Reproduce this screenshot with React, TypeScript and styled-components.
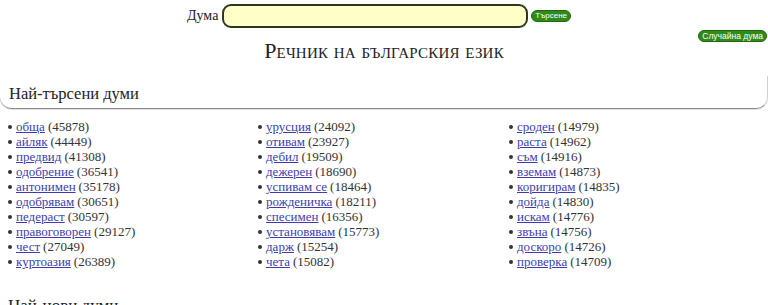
import React from 'react';
import styled, { createGlobalStyle } from 'styled-components';

const GlobalStyle = createGlobalStyle`
    body {
        margin: 0;
        background: #fff;
        font-family: "Liberation Serif", "Times New Roman", serif;
        color: #222;
    }
`;

const Page = styled.div`
    width: 768px;
`;

const SearchRow = styled.form`
    display: flex;
    align-items: center;
    justify-content: center;
    gap: 3px;
    padding-top: 4px;
    margin: 0 0 0 -10px;
`;

const Label = styled.label`
    font-size: 14px;
    color: #222;
    margin-right: 1px;
`;

const WordInput = styled.input`
    width: 296px;
    height: 20px;
    padding: 0 3px;
    background: #ffffc8;
    border: 2px solid #2f3522;
    border-radius: 9px;
    outline: none;
`;

const GreenButton = styled.button<{ $size: number }>`
    background: #2f8a18;
    color: #fff;
    border: 1px solid #1f6a10;
    border-radius: 7px;
    font-family: "Liberation Sans", Arial, sans-serif;
    font-size: ${(p) => p.$size}px;
    line-height: 1;
    padding: 1px 3px 1px;
    cursor: pointer;
`;

const RandomRow = styled.div`
    display: flex;
    justify-content: flex-end;
    height: 12px;
    margin-top: 2px;
    padding-right: 1px;
`;

const Title = styled.h1`
    margin: -4px 0 0;
    text-align: center;
    font-weight: normal;
    font-size: 22px;
    line-height: 26px;
    font-variant: small-caps;
    letter-spacing: 0.2px;
    color: #222;
`;

const SectionHead = styled.div`
    margin-top: 12px;
    padding: 7px 9px 3px;
    border-bottom: 1px solid #8a8a8a;
    border-right: 1px solid #d0d0d0;
    border-radius: 0 0 12px 12px;
    box-shadow: 0 1px 1px rgba(0, 0, 0, 0.12);
`;

const SectionTitle = styled.h2`
    margin: 0;
    font-weight: normal;
    font-size: 16.5px;
    line-height: 22px;
    color: #222;
`;

const Columns = styled.div`
    display: grid;
    grid-template-columns: 250px 251px 1fr;
    padding: 10px 0 0 8px;
`;

const List = styled.ul`
    list-style: none;
    margin: 0;
    padding: 0;
`;

const Item = styled.li`
    display: flex;
    align-items: center;
    font-size: 13px;
    line-height: 15px;
    color: #333;

    &::before {
        content: '';
        width: 4px;
        height: 4px;
        background: #333;
        border-radius: 50%;
        margin-right: 4px;
    }
`;

const WordLink = styled.a`
    color: #3d3db0;
    text-decoration: underline;
    margin-right: 3px;
`;

const NextHead = styled.div`
    margin-top: 26px;
    padding-left: 8px;
    font-size: 17px;
    line-height: 22px;
`;

const columns: [string, number][][] = [
    [
        ['обща', 45878],
        ['айляк', 44449],
        ['предвид', 41308],
        ['одобрение', 36541],
        ['антонимен', 35178],
        ['одобрявам', 30651],
        ['педераст', 30597],
        ['правоговорен', 29127],
        ['чест', 27049],
        ['куртоазия', 26389],
    ],
    [
        ['урусция', 24092],
        ['отивам', 23927],
        ['дебил', 19509],
        ['дежерен', 18690],
        ['успивам се', 18464],
        ['рожденичка', 18211],
        ['спесимен', 16356],
        ['установявам', 15773],
        ['дарж', 15254],
        ['чета', 15082],
    ],
    [
        ['сроден', 14979],
        ['раста', 14962],
        ['съм', 14916],
        ['вземам', 14873],
        ['коригирам', 14835],
        ['дойда', 14830],
        ['искам', 14776],
        ['звъна', 14756],
        ['доскоро', 14726],
        ['проверка', 14709],
    ],
];

const App: React.FC = () => {
    return (
        <Page>
            <GlobalStyle />
            <SearchRow onSubmit={(e) => e.preventDefault()}>
                <Label htmlFor="word">Дума</Label>
                <WordInput id="word" type="text" />
                <GreenButton $size={8} type="submit">
                    Търсене
                </GreenButton>
            </SearchRow>
            <RandomRow>
                <GreenButton $size={8.5} type="button">
                    Случайна дума
                </GreenButton>
            </RandomRow>
            <Title>Речник на българския език</Title>
            <SectionHead>
                <SectionTitle>Най-търсени думи</SectionTitle>
            </SectionHead>
            <Columns>
                {columns.map((col, i) => (
                    <List key={i}>
                        {col.map(([word, count]) => (
                            <Item key={word}>
                                <WordLink href="#">{word}</WordLink>({count})
                            </Item>
                        ))}
                    </List>
                ))}
            </Columns>
            <NextHead>Най-нови думи</NextHead>
        </Page>
    );
};

export default App;
